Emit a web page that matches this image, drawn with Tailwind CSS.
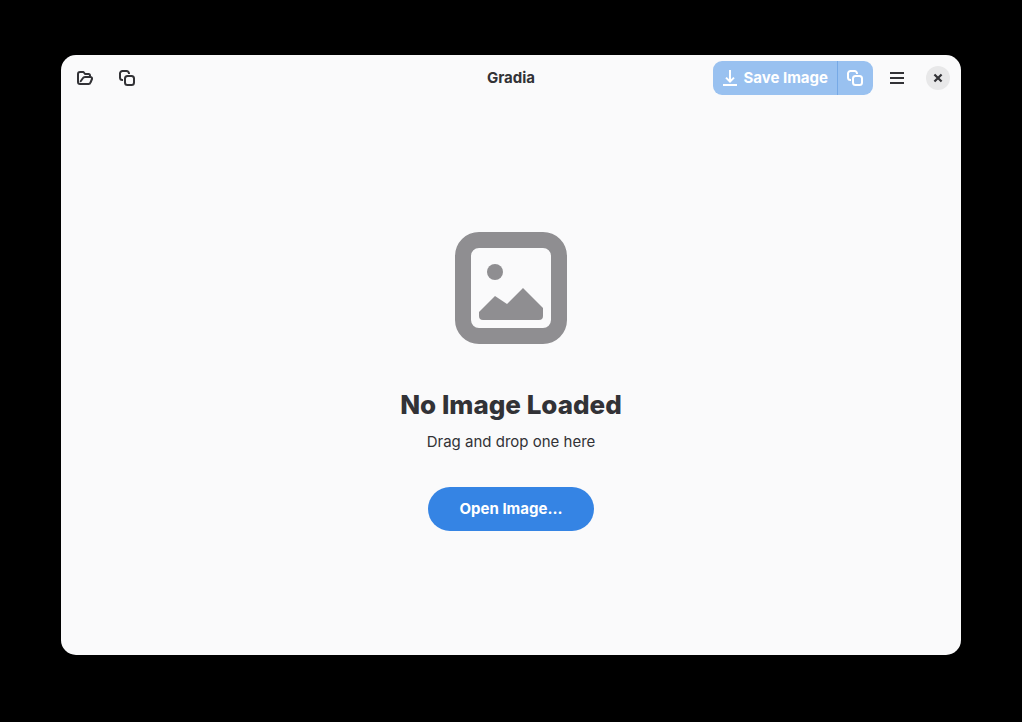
<!DOCTYPE html>
<html lang="en">
<head>
<meta charset="utf-8">
<meta name="viewport" content="width=device-width, initial-scale=1">
<title>Gradia</title>
<script src="https://cdn.jsdelivr.net/npm/@tailwindcss/browser@4"></script>
</head>
<body class="flex min-h-screen bg-black px-[61px] pt-[55px] pb-[67px] font-['Inter',sans-serif] text-[15px] leading-5 text-[#323236]">
<div class="flex flex-1 flex-col overflow-hidden rounded-[15px] bg-[#fafafb]">
  <header class="grid grid-cols-[1fr_auto_1fr] items-center px-[7px] py-1.5">
    <div class="flex gap-2">
      <button type="button" aria-label="Open image" class="grid size-[34px] place-items-center rounded-lg">
        <svg class="size-4" viewBox="0 0 16 16" fill="none" stroke="currentColor" stroke-width="2" stroke-linejoin="round" stroke-linecap="round"><path d="M13 6V5.500A1.500 1.500 0 0 0 11.500 4H8L6.500 2H3a2 2 0 0 0-2 2v8a2 2 0 0 0 2 2h8.500c1 0 1.700-.5 2-1.500L15 9c.2-1.200-.4-2-1.500-2H8c-1 0-1.700.4-2.200 1.300L3.700 11.300"/></svg>
      </button>
      <button type="button" aria-label="Paste from clipboard" class="grid size-[34px] place-items-center rounded-lg">
        <svg class="size-4" viewBox="0 0 16 16" fill="none" stroke="currentColor" stroke-width="2"><path d="M4 10H3.500A2.500 2.500 0 0 1 1 7.500v-4A2.500 2.500 0 0 1 3.500 1h4A2.500 2.500 0 0 1 10 3.500V4"/><rect x="6" y="6" width="9" height="9" rx="2.500"/></svg>
      </button>
    </div>
    <h1 class="font-bold">Gradia</h1>
    <div class="flex items-center justify-end">
      <div class="flex h-[34px] overflow-hidden rounded-[9px] bg-[#99c1f0] text-white">
        <button type="button" disabled class="flex items-center gap-[5px] border-r border-[#76a9e6] px-[9px] font-bold">
          <svg class="size-4" viewBox="0 0 16 16" fill="currentColor"><path d="M7 0h2v9.200l2.300-2.300 1.400 1.400L8 13 3.300 8.300l1.400-1.400L7 9.200zM1 14h14v2H1z"/></svg>
          <span>Save Image</span>
        </button>
        <button type="button" disabled aria-label="Copy image" class="flex items-center pr-2.5 pl-[9px]">
          <svg class="size-4" viewBox="0 0 16 16" fill="none" stroke="currentColor" stroke-width="2"><path d="M4 10H3.500A2.500 2.500 0 0 1 1 7.500v-4A2.500 2.500 0 0 1 3.500 1h4A2.500 2.500 0 0 1 10 3.500V4"/><rect x="6" y="6" width="9" height="9" rx="2.500"/></svg>
        </button>
      </div>
      <button type="button" aria-label="Main menu" class="ml-[7px] grid size-[34px] place-items-center rounded-lg">
        <svg class="size-4" viewBox="0 0 16 16" fill="currentColor"><path d="M1 2h14v2H1zM1 7h14v2H1zM1 12h14v2H1z"/></svg>
      </button>
      <button type="button" aria-label="Close" class="mr-1 ml-3 grid size-6 place-items-center rounded-full bg-[#e8e8e9]">
        <svg class="size-4" viewBox="0 0 16 16" fill="none" stroke="currentColor" stroke-width="2.200" stroke-linecap="square"><path d="M5.200 5.200l5.600 5.600M10.800 5.200l-5.600 5.600"/></svg>
      </button>
    </div>
  </header>
  <main class="flex flex-1 flex-col items-center justify-center pt-1.5">
    <svg class="size-28 text-[#8f8e91]" viewBox="0 0 112 112" fill="currentColor" aria-hidden="true"><path fill-rule="evenodd" d="M24 0h64a24 24 0 0 1 24 24v64a24 24 0 0 1-24 24H24A24 24 0 0 1 0 88V24A24 24 0 0 1 24 0zm0 16a8 8 0 0 0-8 8v64a8 8 0 0 0 8 8h64a8 8 0 0 0 8-8V24a8 8 0 0 0-8-8z"/><circle cx="40" cy="40" r="8"/><path d="M24 80l16-16 12 8 16-16 20 20v8a4 4 0 0 1-4 4H28a4 4 0 0 1-4-4z"/></svg>
    <h2 class="mt-[45px] text-[26px] leading-8 font-extrabold">No Image Loaded</h2>
    <p class="mt-[11px]">Drag and drop one here</p>
    <button type="button" class="mt-[35px] h-11 rounded-full bg-[#3584e4] px-8 font-bold text-white">Open Image…</button>
  </main>
</div>
</body>
</html>
